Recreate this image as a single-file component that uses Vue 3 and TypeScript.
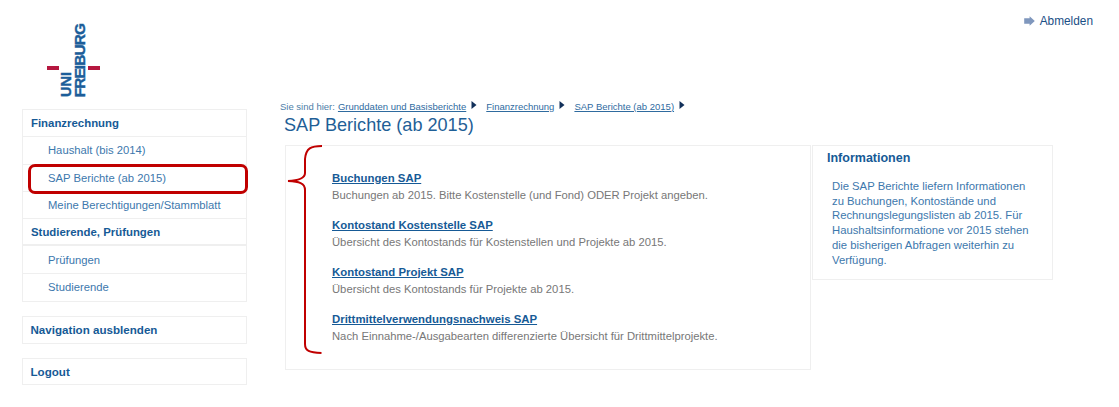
<template>
  <div class="page">
    <aside class="sidebar">
      <div class="logo">
        <span class="logo-uni">UNI</span>
        <span class="logo-freiburg">FREIBURG</span>
        <i class="logo-bar left"></i>
        <i class="logo-bar right"></i>
      </div>

      <nav class="nav-box main-nav">
        <template v-for="group in navGroups" :key="group.title">
          <div class="nav-head">{{ group.title }}</div>
          <a
            v-for="item in group.items"
            :key="item"
            class="nav-item"
            :class="{ marked: item === markedItem }"
          >{{ item }}</a>
        </template>
      </nav>
      <div class="nav-box single">Navigation ausblenden</div>
      <div class="nav-box single">Logout</div>
    </aside>

    <main class="main">
      <div class="topbar">
        <svg class="logout-icon" width="11" height="10" viewBox="0 0 11 10">
          <path d="M0.2 2.300H5.600V0.200L10.800 5L5.600 9.800V7.700H0.200Z" fill="#7f97bd" />
        </svg>
        <a class="logout-link">Abmelden</a>
      </div>

      <div class="breadcrumb">
        <span class="crumb-label">Sie sind hier:</span>
        <template v-for="crumb in crumbs" :key="crumb">
          <a>{{ crumb }}</a>
          <svg class="crumb-arrow" width="6" height="8" viewBox="0 0 6 8">
            <path d="M0.5 0V8L5.5 4Z" fill="#12305a" />
          </svg>
        </template>
      </div>
      <h1 class="title">SAP Berichte (ab 2015)</h1>

      <div class="columns">
        <section class="reports">
          <svg class="brace" width="36" height="210" viewBox="0 0 36 210" fill="none">
            <path
              d="M35 1C24 1 19 3 18 14V28C18 33 12 35.500 1 36C12 36.500 18 38 18 45V199C18 206 22 207.500 34.500 208"
              stroke="#c00000"
              stroke-width="2"
            />
          </svg>
          <div v-for="report in reports" :key="report.name" class="report">
            <a class="report-name">{{ report.name }}</a>
            <p class="report-text">{{ report.text }}</p>
          </div>
        </section>

        <section class="info">
          <h2 class="info-title">Informationen</h2>
          <p class="info-text">
            Die SAP Berichte liefern Informationen<br />
            zu Buchungen, Kontostände und<br />
            Rechnungslegungslisten ab 2015. Für<br />
            Haushaltsinformatione vor 2015 stehen<br />
            die bisherigen Abfragen weiterhin zu<br />
            Verfügung.
          </p>
        </section>
      </div>
    </main>
  </div>
</template>

<script setup lang="ts">
interface NavGroup {
  title: string
  items: string[]
}

interface Report {
  name: string
  text: string
}

const markedItem = 'SAP Berichte (ab 2015)'

const navGroups: NavGroup[] = [
  {
    title: 'Finanzrechnung',
    items: ['Haushalt (bis 2014)', 'SAP Berichte (ab 2015)', 'Meine Berechtigungen/Stammblatt']
  },
  {
    title: 'Studierende, Prüfungen',
    items: ['Prüfungen', 'Studierende']
  }
]

const crumbs = ['Grunddaten und Basisberichte', 'Finanzrechnung', 'SAP Berichte (ab 2015)']

const reports: Report[] = [
  {
    name: 'Buchungen SAP',
    text: 'Buchungen ab 2015. Bitte Kostenstelle (und Fond) ODER Projekt angeben.'
  },
  {
    name: 'Kontostand Kostenstelle SAP',
    text: 'Übersicht des Kontostands für Kostenstellen und Projekte ab 2015.'
  },
  {
    name: 'Kontostand Projekt SAP',
    text: 'Übersicht des Kontostands für Projekte ab 2015.'
  },
  {
    name: 'Drittmittelverwendungsnachweis SAP',
    text: 'Nach Einnahme-/Ausgabearten differenzierte Übersicht für Drittmittelprojekte.'
  }
]
</script>

<style scoped>
.page {
  display: flex;
  width: 1119px;
  height: 407px;
  overflow: hidden;
  background: #fff;
  font-family: "Liberation Sans", Arial, sans-serif;
  font-size: 11.250px;
  color: #1f5f97;
}

.sidebar {
  width: 225px;
  margin-left: 22px;
  flex-shrink: 0;
}

.logo {
  position: relative;
  display: flex;
  justify-content: center;
  align-items: flex-end;
  gap: 2px;
  width: 102px;
  height: 97px;
  margin-bottom: 12px;
  font-weight: 700;
  color: #1c5d99;
  -webkit-text-stroke: 0.4px #1c5d99;
}

.logo-uni,
.logo-freiburg {
  writing-mode: vertical-rl;
  transform: rotate(180deg);
  line-height: 12px;
  white-space: nowrap;
}

.logo-uni {
  font-size: 14.500px;
}

.logo-freiburg {
  font-size: 15.500px;
  letter-spacing: -0.950px;
}

.logo-bar {
  position: absolute;
  top: 66px;
  width: 12px;
  height: 3.500px;
  background: #b5173f;
}

.logo-bar.left {
  left: 25px;
}

.logo-bar.right {
  left: 66px;
}

.nav-box {
  display: flex;
  flex-direction: column;
  border: 1px solid #efefef;
  margin-bottom: 14px;
}

.main-nav {
  margin-bottom: 14px;
}

.nav-box.single {
  height: 27.500px;
  box-sizing: border-box;
  justify-content: center;
  padding-left: 7.500px;
  font-size: 11.600px;
  font-weight: 700;
  color: #165a96;
}

.nav-head {
  display: flex;
  align-items: center;
  height: 27.300px;
  padding-left: 8px;
  font-size: 11.400px;
  font-weight: 700;
  color: #165a96;
  border-bottom: 1px solid #efefef;
  box-sizing: border-box;
}

.nav-item + .nav-head {
  border-bottom-width: 2px;
}

.nav-item {
  position: relative;
  display: flex;
  align-items: center;
  height: 27.300px;
  padding-left: 25px;
  color: #3d78ad;
  border-bottom: 1px solid #efefef;
  box-sizing: border-box;
}

.nav-item:last-child {
  border-bottom: none;
}

.nav-item.marked::after {
  content: "";
  position: absolute;
  left: 5px;
  top: -1px;
  width: 220px;
  height: 30px;
  box-sizing: border-box;
  border: 3px solid #c00000;
  border-radius: 7px;
}

.main {
  flex: 1;
  margin-left: 33px;
  min-width: 0;
}

.topbar {
  display: flex;
  justify-content: flex-end;
  align-items: center;
  gap: 5px;
  height: 14px;
  margin-top: 14px;
  padding-right: 26px;
}

.logout-link {
  font-size: 11.850px;
  color: #1a4f86;
}

.breadcrumb {
  display: flex;
  align-items: center;
  gap: 5px;
  margin-top: 72px;
  height: 12px;
  font-size: 9.500px;
  color: #4d7ea8;
}

.breadcrumb a {
  color: #2f6b9f;
  text-decoration: underline;
}

.crumb-label {
  margin-right: -2px;
}

.crumb-arrow {
  margin: -3px 4px 0 0;
}

.title {
  margin: 3px 0 9px 4px;
  font-size: 18.100px;
  line-height: 21px;
  font-weight: 400;
  color: #1f5f97;
}

.columns {
  display: flex;
  align-items: flex-start;
  gap: 1px;
  margin-left: 5px;
}

.reports {
  position: relative;
  box-sizing: border-box;
  width: 526px;
  height: 225px;
  padding: 23.500px 0 0 46px;
  border: 1px solid #efefef;
}

.brace {
  position: absolute;
  left: 1px;
  top: -1px;
}

.report {
  margin-bottom: 14.500px;
}

.report-name {
  display: block;
  margin-bottom: 2px;
  color: #165a96;
  font-size: 11.400px;
  font-weight: 700;
  text-decoration: underline;
  line-height: 16.500px;
}

.report-text {
  margin: 0;
  color: #777;
  line-height: 14px;
}

.info {
  box-sizing: border-box;
  width: 241px;
  height: 135px;
  padding: 4px 0 0 14px;
  border: 1px solid #efefef;
}

.info-title {
  margin: 0 0 13px;
  font-size: 12.500px;
  line-height: 16px;
  color: #165a96;
}

.info-text {
  margin: 0 0 0 5px;
  font-size: 11.300px;
  line-height: 14.700px;
  color: #3d78ad;
}
</style>
